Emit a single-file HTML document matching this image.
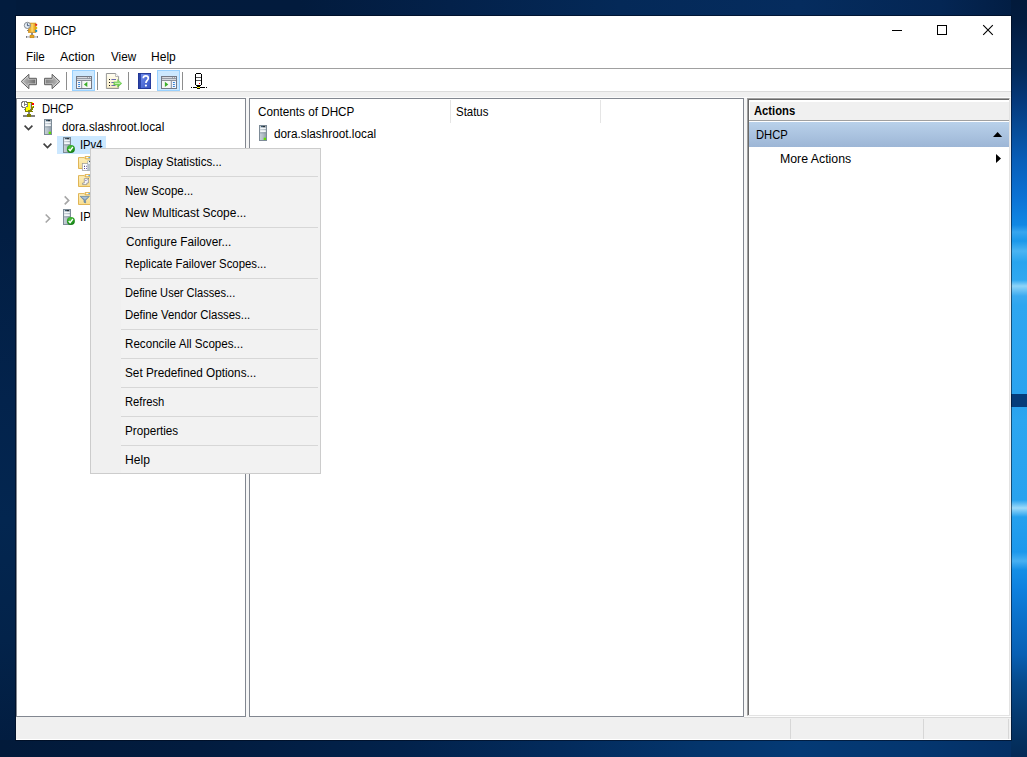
<!DOCTYPE html>
<html>
<head>
<meta charset="utf-8">
<title>DHCP</title>
<style>
html,body{margin:0;padding:0;}
body{width:1027px;height:757px;overflow:hidden;position:relative;background:#021c3e;
 font-family:"Liberation Sans",sans-serif;font-size:12px;color:#000;}
div,span,svg{position:absolute;box-sizing:border-box;}
.t{white-space:nowrap;line-height:14px;height:14px;font-size:12px;transform-origin:0 50%;}
.b{font-weight:bold;}
/* wallpaper strips */
#wp-top{left:0;top:0;width:1027px;height:16px;
 background:linear-gradient(90deg,#021b3c 0,#021b3d 300px,#03214a 450px,#042958 620px,#052c5e 800px,#042654 940px,#021c40 1027px);}
#wp-left{left:0;top:0;width:16px;height:757px;
 background:linear-gradient(180deg,#021c3e 0,#021d41 200px,#03234c 400px,#032650 520px,#03234a 640px,#021c3f 757px);}
#wp-bot{left:0;top:740px;width:1027px;height:17px;
 background:linear-gradient(90deg,#021a3a 0,#021c3f 200px,#02224b 400px,#032b5c 560px,#04356c 700px,#043a75 800px,#04366f 920px,#042f63 1027px);}
#wp-right{left:1011px;top:0;width:16px;height:757px;
 background:linear-gradient(180deg,#021a3b 0,#021b3e 20px,#03214a 40px,#032a5a 70px,#05387a 100px,#064c98 130px,#085eb8 160px,#0a6ecf 190px,#0b74d6 200px,#1088e4 225px,#36a5ef 232px,#1a98ea 241px,#4ab4f2 251px,#28a4ee 262px,#30a8f0 280px,#8ed4f8 286px,#3aaaf0 296px,#2ea6f0 305px,#2aa3ef 394px,#2aa3ef 407px,#2ca6f0 420px,#28a2ee 500px,#9cdafa 508px,#24a0ee 517px,#1c98ec 552px,#48b0f2 561px,#148ee6 570px,#0e80de 590px,#0b72cc 615px,#0860b4 654px,#064a8c 683px,#053c74 711px,#04305f 740px,#042a56 757px);}
#wp-band{left:1011px;top:394px;width:16px;height:13px;background:#063c7a;}
.streak{left:1011px;width:16px;height:5px;}
/* window */
#win{left:16px;top:16px;width:995px;height:724px;background:#fff;box-shadow:0 0 0 1px rgba(0,8,24,.55);}
#menuline{left:16px;top:68px;width:995px;height:1px;background:#a0a0a0;}
#graybar{left:16px;top:92px;width:995px;height:625px;background:#f0f0f0;}
#status{left:16px;top:717px;width:995px;height:23px;background:#f0f0f0;}
.pane{background:#fff;border:1px solid #828790;}
.vsep{top:72px;width:1px;height:18px;background:#8d8d8d;}
.tbhl{top:70px;width:23px;height:21px;background:#cce8ff;border:1px solid #99d1ff;}
.sdiv{top:719px;width:1px;height:20px;background:#d7d7d7;}
.cdiv{top:100px;width:1px;height:23px;background:#e5e5e5;}
/* context menu */
#ctx{left:90px;top:148px;width:231px;height:326px;background:#f2f2f2;border:1px solid #ccc;}
.sep{left:121px;width:197px;height:1px;background:#d7d7d7;}
</style>
</head>
<body>
<div id="wp-top"></div>
<div id="wp-left"></div>
<div id="wp-bot"></div>
<div id="wp-right"></div>
<div id="wp-band"></div>

<div id="win"></div>
<div id="menuline"></div>
<div id="graybar"></div>
<div id="status"></div>
<div style="left:16px;top:739px;width:995px;height:1px;background:#fff;"></div>

<!-- panes -->
<div style="left:16px;top:91px;width:995px;height:1px;background:#dcdcdc;"></div>
<div style="left:16px;top:97px;width:995px;height:1px;background:#fbfbfb;"></div>
<div style="left:246px;top:98px;width:3px;height:619px;background:#f6f6f6;"></div>
<div style="left:744px;top:98px;width:3px;height:619px;background:#f6f6f6;"></div>
<div class="pane" id="p-left" style="left:16px;top:98px;width:230px;height:619px;"></div>
<div class="pane" id="p-mid" style="left:249px;top:98px;width:495px;height:619px;"></div>
<div id="p-right" style="left:747px;top:98px;width:263px;height:618px;background:#fff;border-left:1px solid #a0a0a0;border-top:1px solid #a0a0a0;border-right:1px solid #e3e3e3;border-bottom:1px solid #e3e3e3;"></div>
<div style="left:748px;top:99px;width:261px;height:616px;border-left:1px solid #696969;border-top:1px solid #696969;"></div>

<div style="left:744px;top:716px;width:267px;height:1px;background:#fdfdfd;"></div>
<div style="left:744px;top:717px;width:267px;height:1px;background:#dadada;"></div>
<!-- toolbar -->
<div class="vsep" style="left:66px"></div>
<div class="vsep" style="left:97px"></div>
<div class="vsep" style="left:128px"></div>
<div class="vsep" style="left:182px"></div>
<div class="tbhl" style="left:72px"></div>
<div class="tbhl" style="left:157px"></div>

<!-- list header dividers -->
<div class="cdiv" style="left:450px"></div>
<div class="cdiv" style="left:600px"></div>

<!-- status dividers -->
<div class="sdiv" style="left:790px"></div>
<div class="sdiv" style="left:923px"></div>
<div class="sdiv" style="left:1008px"></div>

<!-- tree selection -->
<div id="sel" style="left:57px;top:136px;width:49px;height:18px;background:#cce8ff;"></div>

<svg width="0" height="0" style="left:0;top:0">
<defs>
<linearGradient id="gSrv" x1="0" y1="0" x2="1" y2="0"><stop offset="0" stop-color="#c9d2d9"/><stop offset=".5" stop-color="#b3bec7"/><stop offset="1" stop-color="#8e9ba6"/></linearGradient>
<linearGradient id="gArr" x1="0" y1="0" x2="0" y2="1"><stop offset="0" stop-color="#b9b9b9"/><stop offset=".5" stop-color="#8f8f8f"/><stop offset="1" stop-color="#a9a9a9"/></linearGradient>
<linearGradient id="gFold" x1="0" y1="0" x2="0" y2="1"><stop offset="0" stop-color="#fdf0be"/><stop offset="1" stop-color="#f8dc8e"/></linearGradient>
<linearGradient id="gOr" x1="0" y1="0" x2="1" y2="0"><stop offset="0" stop-color="#e39a1c"/><stop offset=".55" stop-color="#f7c64a"/><stop offset=".75" stop-color="#f3b838"/><stop offset="1" stop-color="#d68d14"/></linearGradient>
<linearGradient id="gHelp" x1="0" y1="0" x2="1" y2="1"><stop offset="0" stop-color="#6f8cec"/><stop offset="1" stop-color="#3350c0"/></linearGradient>
<radialGradient id="gChk" cx=".4" cy=".3" r=".8"><stop offset="0" stop-color="#4cc23c"/><stop offset=".6" stop-color="#239a1f"/><stop offset="1" stop-color="#0f6a12"/></radialGradient>
<linearGradient id="gAct" x1="0" y1="0" x2="0" y2="1"><stop offset="0" stop-color="#b9d1ea"/><stop offset="1" stop-color="#9db6d6"/></linearGradient>
<linearGradient id="gGrn" x1="0" y1="0" x2="0" y2="1"><stop offset="0" stop-color="#a4ea80"/><stop offset="1" stop-color="#4dbd32"/></linearGradient>
</defs>
</svg>

<!-- title icon -->
<svg style="left:23px;top:21px" width="17" height="18" viewBox="23 21 17 18">
 <rect x="28.4" y="23.1" width="7.4" height="9.4" fill="url(#gOr)" stroke="#c98a14" stroke-width=".7"/>
 <rect x="31.2" y="24" width="1.8" height="7.6" fill="#f9d46a" opacity=".8"/>
 <circle cx="36.2" cy="24.8" r="1.15" fill="#e3261c"/>
 <circle cx="36.2" cy="27.9" r="1.15" fill="#d8b400"/>
 <circle cx="36.2" cy="31" r="1.15" fill="#1c8fc8"/>
 <circle cx="27.4" cy="25.4" r="3.1" fill="#e6eef6" stroke="#7b8087" stroke-width=".9"/>
 <path d="M27.4,23.3 V25.7 H29.6" fill="none" stroke="#34496a" stroke-width=".9"/>
 <rect x="27" y="30" width="1.4" height=".9" fill="#777"/>
 <rect x="31.2" y="32.8" width="1.6" height="2.3" fill="#6d7684"/>
 <rect x="26" y="36" width="12" height="1.8" fill="#c4c7d0"/>
 <rect x="26" y="36" width="1" height="1.8" fill="#777"/>
 <rect x="37" y="36" width="1" height="1.8" fill="#777"/>
 <rect x="30" y="35.1" width="4" height="2.7" fill="#e7a51f" stroke="#b97c0c" stroke-width=".5"/>
</svg>

<!-- tree DHCP icon (16 colour) -->
<svg style="left:20px;top:100px" width="16" height="18" viewBox="20 100 16 18" shape-rendering="crispEdges">
 <path d="M22,101 H27 V102 H28 V107 H27 V108 H22 V107 H21 V102 H22 Z" fill="#fff"/>
 <path d="M22,101 H27 V102 H28 V107 H27 V108 H22 V107 H21 V102 H22 Z M22.9,102 H26.1 V102.9 H27 V106.1 H26.1 V107 H22.9 V106.1 H22 V102.9 H22.9 Z" fill="#808080" fill-rule="evenodd"/>
 <rect x="24" y="102" width="1" height="4" fill="#808080"/><rect x="25" y="104" width="2" height="1" fill="#808080"/>
 <rect x="27" y="102" width="5" height="1" fill="#808000"/>
 <rect x="28" y="103" width="3" height="6" fill="#ffff00"/>
 <rect x="26" y="107" width="5" height="4" fill="#ffff00"/>
 <rect x="30" y="103" width="1" height="6" fill="#c8c8d8"/>
 <rect x="31" y="102" width="1" height="9" fill="#808000"/>
 <rect x="25" y="108" width="1" height="3" fill="#808000"/>
 <rect x="25" y="111" width="8" height="1" fill="#808000"/>
 <rect x="28" y="110" width="4" height="1" fill="#808000"/>
 <rect x="24" y="109" width="1" height="1" fill="#8080a0"/><rect x="30" y="109" width="1" height="1" fill="#606080"/>
 <rect x="32" y="102" width="1" height="1" fill="#ffff00"/>
 <rect x="32" y="103" width="2" height="2" fill="#ff0000"/>
 <rect x="32" y="106" width="1" height="1" fill="#ffff00"/>
 <rect x="33" y="106" width="1" height="2" fill="#808000"/>
 <rect x="32" y="107" width="1" height="3" fill="#808000"/>
 <rect x="28" y="112" width="2" height="2" fill="#808090"/>
 <rect x="23" y="115" width="12" height="2" fill="#808080"/>
 <rect x="27" y="114" width="4" height="3" fill="#808000"/>
</svg>

<!-- tree chevrons -->
<svg style="left:22px;top:122px" width="14" height="12" viewBox="22 122 14 12"><path d="M24.6,125.6 L28.5,129.6 L32.4,125.6" fill="none" stroke="#404040" stroke-width="1.6"/></svg>
<svg style="left:41px;top:140px" width="14" height="12" viewBox="41 140 14 12"><path d="M43.6,143.6 L47.5,147.6 L51.4,143.6" fill="none" stroke="#404040" stroke-width="1.6"/></svg>
<svg style="left:62px;top:194px" width="10" height="13" viewBox="62 194 10 13"><path d="M64.7,196.4 L68.7,200.4 L64.7,204.4" fill="none" stroke="#a6a6a6" stroke-width="1.6"/></svg>
<svg style="left:43px;top:212px" width="10" height="13" viewBox="43 212 10 13"><path d="M45.7,214.5 L49.7,218.5 L45.7,222.5" fill="none" stroke="#a6a6a6" stroke-width="1.6"/></svg>

<!-- servers -->
<svg style="left:44px;top:119px" width="8" height="16" viewBox="0 0 8 16"><g>
 <rect x=".5" y=".5" width="7" height="15" fill="url(#gSrv)" stroke="#7d8b97"/>
 <rect x="2" y="1.2" width="4" height="1" fill="#1d3f55"/>
 <rect x="4" y="1.2" width="2" height="1" fill="#2a2a2a"/>
 <rect x="1.2" y="2.6" width="5.6" height="1.6" fill="#f4f7f9"/>
 <rect x="1.2" y="5.2" width="5.6" height="1.8" fill="#f4f7f9"/>
 <rect x="1" y="7.6" width="6" height=".7" fill="#8996a1"/>
</g><rect x="4.7" y="12.7" width="2.3" height="2.3" fill="#5fe000"/></svg>
<svg style="left:259px;top:125px" width="8" height="16" viewBox="0 0 8 16"><g>
 <rect x=".5" y=".5" width="7" height="15" fill="url(#gSrv)" stroke="#7d8b97"/>
 <rect x="2" y="1.2" width="4" height="1" fill="#1d3f55"/>
 <rect x="4" y="1.2" width="2" height="1" fill="#2a2a2a"/>
 <rect x="1.2" y="2.6" width="5.6" height="1.6" fill="#f4f7f9"/>
 <rect x="1.2" y="5.2" width="5.6" height="1.8" fill="#f4f7f9"/>
 <rect x="1" y="7.6" width="6" height=".7" fill="#8996a1"/>
</g><rect x="4.7" y="12.7" width="2.3" height="2.3" fill="#5fe000"/></svg>
<svg style="left:63px;top:137px" width="13" height="17" viewBox="0 0 13 17"><g>
 <rect x=".5" y=".5" width="7" height="15" fill="url(#gSrv)" stroke="#7d8b97"/>
 <rect x="2" y="1.2" width="4" height="1" fill="#1d3f55"/>
 <rect x="4" y="1.2" width="2" height="1" fill="#2a2a2a"/>
 <rect x="1.2" y="2.6" width="5.6" height="1.6" fill="#f4f7f9"/>
 <rect x="1.2" y="5.2" width="5.6" height="1.8" fill="#f4f7f9"/>
 <rect x="1" y="7.6" width="6" height=".7" fill="#8996a1"/>
</g><g transform="translate(7.9,11.9)">
 <circle cx="0" cy="0" r="4" fill="url(#gChk)"/>
 <path d="M-2.2,.1 L-.8,1.7 L2,-1.9" fill="none" stroke="#fff" stroke-width="1.35"/>
</g></svg>
<svg style="left:63px;top:209px" width="13" height="17" viewBox="0 0 13 17"><g>
 <rect x=".5" y=".5" width="7" height="15" fill="url(#gSrv)" stroke="#7d8b97"/>
 <rect x="2" y="1.2" width="4" height="1" fill="#1d3f55"/>
 <rect x="4" y="1.2" width="2" height="1" fill="#2a2a2a"/>
 <rect x="1.2" y="2.6" width="5.6" height="1.6" fill="#f4f7f9"/>
 <rect x="1.2" y="5.2" width="5.6" height="1.8" fill="#f4f7f9"/>
 <rect x="1" y="7.6" width="6" height=".7" fill="#8996a1"/>
</g><g transform="translate(7.9,11.9)">
 <circle cx="0" cy="0" r="4" fill="url(#gChk)"/>
 <path d="M-2.2,.1 L-.8,1.7 L2,-1.9" fill="none" stroke="#fff" stroke-width="1.35"/>
</g></svg>

<!-- folders (clipped by menu) -->
<svg style="left:78px;top:156px" width="16" height="16" viewBox="0 0 16 16"><g>
 <path d="M7,.6 L15.4,.6 L15.4,3 L7,3 Z" fill="#f6d884" stroke="#dcae48" stroke-width=".9"/>
 <rect x="8.2" y="1.1" width="4" height="1.3" fill="#fff"/>
 <rect x="10.4" y="1.1" width="3" height="1.3" fill="#4aa0e8"/>
 <path d="M.5,1.6 L6.2,1.6 L7.4,2.9 L15.5,2.9 L15.5,12.5 L.5,12.5 Z" fill="url(#gFold)" stroke="#dcae48" stroke-width=".9"/>
</g>
 <rect x="4.3" y="7.6" width="6.2" height="7" fill="#fff" stroke="#9a9a9a" stroke-width=".7"/>
 <rect x="6" y="9.8" width="1" height="1" fill="#2a2050"/><rect x="8" y="9.8" width="1" height="1" fill="#7a68b0"/>
 <rect x="6" y="12" width="1" height="1" fill="#5a48a0"/><rect x="8" y="12" width="1" height="1" fill="#7a68b0"/>
 <rect x="9.8" y="4.8" width="3.4" height="10" fill="#b9c3cb" stroke="#98a4ae" stroke-width=".5"/>
 <rect x="10" y="5" width="3" height="3" fill="#eef2f6"/>
 <rect x="11" y="5.1" width="1.2" height="1" fill="#123a4a"/>
</svg>
<svg style="left:78px;top:174px" width="16" height="16" viewBox="0 0 16 16"><g>
 <path d="M7,.6 L15.4,.6 L15.4,3 L7,3 Z" fill="#f6d884" stroke="#dcae48" stroke-width=".9"/>
 <rect x="8.2" y="1.1" width="4" height="1.3" fill="#fff"/>
 <rect x="10.4" y="1.1" width="3" height="1.3" fill="#4aa0e8"/>
 <path d="M.5,1.6 L6.2,1.6 L7.4,2.9 L15.5,2.9 L15.5,12.5 L.5,12.5 Z" fill="url(#gFold)" stroke="#dcae48" stroke-width=".9"/>
</g>
 <path d="M6.3,4.6 H10.4 V9 H8.8 V10.6 H4.6 V9 H6.3 Z" fill="#f4f4f8" stroke="#8a8a8a" stroke-width=".7"/>
 <rect x="7.4" y="6" width="1" height="1" fill="#6a58a8"/>
 <path d="M9.6,5.4 L10.8,4.2" stroke="#777" stroke-width=".9"/>
</svg>
<svg style="left:78px;top:192px" width="16" height="16" viewBox="0 0 16 16"><g>
 <path d="M7,.6 L15.4,.6 L15.4,3 L7,3 Z" fill="#f6d884" stroke="#dcae48" stroke-width=".9"/>
 <rect x="8.2" y="1.1" width="4" height="1.3" fill="#fff"/>
 <rect x="10.4" y="1.1" width="3" height="1.3" fill="#4aa0e8"/>
 <path d="M.5,1.6 L6.2,1.6 L7.4,2.9 L15.5,2.9 L15.5,12.5 L.5,12.5 Z" fill="url(#gFold)" stroke="#dcae48" stroke-width=".9"/>
</g>
 <path d="M2.2,4.4 H11.4 L7.6,8.2 V10.9 L6,10.2 V8.2 Z" fill="#7d9bb8" stroke="#56789a" stroke-width=".6"/>
 <path d="M3.6,5 H10 L7,7.6 Z" fill="#a9c0d6"/>
</svg>

<!-- toolbar: back / forward -->
<svg style="left:19px;top:72px" width="44" height="19" viewBox="19 72 44 19">
 <defs>
 <linearGradient id="gA1" x1="0" y1="0" x2="1" y2="0"><stop offset="0" stop-color="#b4b4b4"/><stop offset=".45" stop-color="#9a9a9a"/><stop offset="1" stop-color="#6f6f6f"/></linearGradient>
 <linearGradient id="gA2" x1="0" y1="0" x2="1" y2="0"><stop offset="0" stop-color="#858585"/><stop offset=".55" stop-color="#9a9a9a"/><stop offset="1" stop-color="#b8b8b8"/></linearGradient>
 </defs>
 <path d="M21.2,81.5 L28.9,74.3 L28.9,78.3 L36.4,78.3 L36.4,84.7 L28.9,84.7 L28.9,88.7 Z" fill="#cfcfcf" stroke="#5c5c5c" stroke-width="1" stroke-linejoin="round"/>
 <path d="M23.1,81.5 L27.7,77.2 L27.7,79.5 L35.2,79.5 L35.2,83.5 L27.7,83.5 L27.7,85.8 Z" fill="url(#gA1)"/>
 <path d="M59.8,81.5 L52.1,74.3 L52.1,78.3 L44.6,78.3 L44.6,84.7 L52.1,84.7 L52.1,88.7 Z" fill="#cfcfcf" stroke="#5c5c5c" stroke-width="1" stroke-linejoin="round"/>
 <path d="M57.9,81.5 L53.3,77.2 L53.3,79.5 L45.8,79.5 L45.8,83.5 L53.3,83.5 L53.3,85.8 Z" fill="url(#gA2)"/>
</svg>

<!-- toolbar: show/hide tree -->
<svg style="left:76px;top:76px" width="16" height="13" viewBox="0 0 16 13">
 <rect x=".5" y=".5" width="15" height="12" fill="#8d929d" stroke="#747986"/>
 <rect x="1.2" y="1.2" width="9.8" height=".9" fill="#e9ebf0"/>
 <rect x="11.8" y="1.1" width="1" height="1" fill="#fff"/><rect x="13.8" y="1.1" width="1" height="1" fill="#fff"/>
 <rect x="1" y="3.1" width="14" height=".9" fill="#dfe2e8"/>
 <rect x="1" y="5" width="4.2" height="7" fill="#f3f5fa"/>
 <rect x="6.2" y="5" width="8.8" height="7" fill="#f6f6f6"/>
 <rect x="2" y="6" width="2.2" height="1" rx=".4" fill="#2f7fd6"/><rect x="2" y="8" width="2.2" height="1" rx=".4" fill="#2f7fd6"/><rect x="2" y="10" width="2.2" height="1" rx=".4" fill="#2f7fd6"/>
 <path d="M7.9,8.4 L11.3,5.8 L11.3,11 Z" fill="#3bb02a"/>
</svg>

<!-- toolbar: export list -->
<svg style="left:105px;top:72px" width="18" height="18" viewBox="105 72 18 18">
 <defs><linearGradient id="gPg" x1="0" y1="0" x2="0" y2="1"><stop offset="0" stop-color="#fffdf2"/><stop offset="1" stop-color="#fbefc6"/></linearGradient></defs>
 <path d="M106.4,73.5 H115.6 L118.6,76.5 V88.5 H106.4 Z" fill="url(#gPg)" stroke="#8c8c8c" stroke-width=".9"/>
 <path d="M115.6,73.5 V76.5 H118.6" fill="#fff" stroke="#9a9a9a" stroke-width=".7"/>
 <rect x="106.9" y="87" width="11.3" height="1" fill="#e9dfc0"/>
 <rect x="109" y="79" width="1" height="1" fill="#111"/><rect x="109" y="82" width="1" height="1" fill="#111"/><rect x="109" y="85" width="1" height="1" fill="#111"/>
 <rect x="111.4" y="79" width="4.6" height="1" fill="#6c6cb0"/><rect x="111.4" y="82" width="3" height="1" fill="#6c6cb0"/><rect x="111.4" y="85" width="4" height="1" fill="#6c6cb0"/>
 <path d="M113.8,81.9 H117.6 V79.6 L121.8,83.4 L117.6,87.2 V84.9 H113.8 Z" fill="url(#gGrn)" stroke="#55c038" stroke-width=".5" opacity=".92"/>
 <path d="M115,83.4 H120" stroke="#d9f8c8" stroke-width="1" opacity=".85"/>
</svg>

<!-- toolbar: help -->
<svg style="left:138px;top:73px" width="13" height="16" viewBox="0 0 13 16">
 <rect x="0" y="0" width="13" height="16" fill="#1c2f8c"/>
 <rect x=".6" y=".6" width="2.4" height="14.8" fill="#2c44a8"/>
 <rect x="3" y=".8" width="9.3" height="14.4" fill="url(#gHelp)"/>
 <path d="M5.3,5.2 C5.3,2.2 10.3,2.2 10.3,5.2 C10.3,7.3 7.9,7.4 7.9,10" fill="none" stroke="#fff" stroke-width="1.7"/>
 <circle cx="7.9" cy="12.6" r="1.1" fill="#fff"/>
</svg>

<!-- toolbar: show/hide action pane -->
<svg style="left:161px;top:76px" width="16" height="13" viewBox="0 0 16 13">
 <rect x=".5" y=".5" width="15" height="12" fill="#8d929d" stroke="#747986"/>
 <rect x="1.2" y="1.2" width="9.8" height=".9" fill="#e9ebf0"/>
 <rect x="11.8" y="1.1" width="1" height="1" fill="#fff"/><rect x="13.8" y="1.1" width="1" height="1" fill="#fff"/>
 <rect x="1" y="3.1" width="14" height=".9" fill="#dfe2e8"/>
 <rect x="1" y="5" width="8.8" height="7" fill="#f6f6f6"/>
 <rect x="10.8" y="5" width="4.2" height="7" fill="#f3f5fa"/>
 <rect x="11.8" y="6" width="2.2" height="1" rx=".4" fill="#2f7fd6"/><rect x="11.8" y="8" width="2.2" height="1" rx=".4" fill="#2f7fd6"/><rect x="11.8" y="10" width="2.2" height="1" rx=".4" fill="#2f7fd6"/>
 <path d="M7.3,8.4 L3.9,5.8 L3.9,11 Z" fill="#3bb02a"/>
</svg>

<!-- toolbar: server/network -->
<svg style="left:190px;top:72px" width="18" height="18" viewBox="190 72 18 18" shape-rendering="crispEdges">
 <rect x="196" y="73" width="5" height="1" fill="#000"/>
 <rect x="195" y="74" width="1" height="11" fill="#000"/><rect x="201" y="74" width="1" height="11" fill="#000"/>
 <rect x="196" y="85" width="5" height="1" fill="#000"/>
 <rect x="196" y="77" width="5" height="1" fill="#5a5a5a"/><rect x="196" y="80" width="5" height="1" fill="#5a5a5a"/>
 <rect x="199" y="83" width="1" height="1" fill="#ff0000"/>
 <rect x="197" y="86" width="3" height="1" fill="#000"/>
 <rect x="191" y="87" width="1" height="1" fill="#000"/><rect x="193" y="87" width="4" height="1" fill="#000"/>
 <rect x="197" y="87" width="3" height="1" fill="#f0f000"/>
 <rect x="200" y="87" width="5" height="1" fill="#000"/><rect x="206" y="87" width="1" height="1" fill="#000"/>
 <rect x="197" y="88" width="3" height="1" fill="#000"/>
</svg>

<!-- window controls -->
<svg style="left:890px;top:22px" width="110" height="16" viewBox="890 22 110 16" shape-rendering="crispEdges">
 <rect x="892" y="30" width="10" height="1" fill="#000"/>
 <rect x="937.5" y="25.5" width="9" height="9" fill="none" stroke="#000" stroke-width="1"/>
</svg>
<svg style="left:980px;top:22px" width="16" height="16" viewBox="980 22 16 16">
 <path d="M983.2,25.2 L992.8,34.8 M992.8,25.2 L983.2,34.8" stroke="#000" stroke-width="1.1" fill="none"/>
</svg>

<!-- actions pane -->
<div style="left:750px;top:102px;width:259px;height:18px;background:#f0f0f0;"></div>
<div style="left:749px;top:120px;width:260px;height:1px;background:#a0a0a0;"></div>
<div style="left:749px;top:122px;width:260px;height:25px;background:linear-gradient(180deg,#b9d1ea,#9db6d6);"></div>
<svg style="left:990px;top:130px" width="14" height="9" viewBox="990 130 14 9"><path d="M993,137 L997.6,131.9 L1002.2,137 Z" fill="#000"/></svg>
<svg style="left:994px;top:152px" width="9" height="13" viewBox="994 152 9 13"><path d="M996,153.9 L1001,158.5 L996,163.1 Z" fill="#000"/></svg>


<span class="t" style="left:44.3px;top:24.0px;transform:scaleX(0.9455);color:#000">DHCP</span>
<span class="t" style="left:25.5px;top:50.0px;transform:scaleX(0.9722);color:#000">File</span>
<span class="t" style="left:60.2px;top:50.0px;transform:scaleX(1.0394);color:#000">Action</span>
<span class="t" style="left:110.6px;top:50.0px;transform:scaleX(0.9731);color:#000">View</span>
<span class="t" style="left:151.4px;top:50.0px;transform:scaleX(1.0042);color:#000">Help</span>
<span class="t" style="left:41.6px;top:101.5px;transform:scaleX(0.9273);color:#000">DHCP</span>
<span class="t" style="left:61.6px;top:119.5px;transform:scaleX(0.9827);color:#000">dora.slashroot.local</span>
<span class="t" style="left:79.8px;top:137.5px;transform:scaleX(0.9348);color:#000">IPv4</span>
<span class="t" style="left:79.7px;top:209.5px;transform:scaleX(0.9600);color:#000">IP</span>
<span class="t" style="left:257.5px;top:104.5px;transform:scaleX(0.9765);color:#000">Contents of DHCP</span>
<span class="t" style="left:456.3px;top:104.5px;transform:scaleX(0.9545);color:#000">Status</span>
<span class="t" style="left:273.8px;top:126.5px;transform:scaleX(0.9808);color:#000">dora.slashroot.local</span>
<span class="t b" style="left:754.0px;top:103.5px;transform:scaleX(0.9364);color:#000">Actions</span>
<span class="t" style="left:755.5px;top:127.5px;transform:scaleX(0.9333);color:#000">DHCP</span>
<span class="t" style="left:779.8px;top:151.5px;transform:scaleX(1.0265);color:#000">More Actions</span>

<!-- context menu -->
<div id="ctx"></div>
<div style="left:91px;top:149px;width:30px;height:324px;background:#f0f0f0;"></div>
<span class="t" style="left:124.5px;top:155.0px;transform:scaleX(0.9616);color:#000">Display Statistics...</span>
<span class="t" style="left:124.5px;top:184.0px;transform:scaleX(0.9571);color:#000">New Scope...</span>
<span class="t" style="left:124.5px;top:206.0px;transform:scaleX(0.9942);color:#000">New Multicast Scope...</span>
<span class="t" style="left:125.5px;top:235.0px;transform:scaleX(0.9813);color:#000">Configure Failover...</span>
<span class="t" style="left:124.6px;top:257.0px;transform:scaleX(0.9466);color:#000">Replicate Failover Scopes...</span>
<span class="t" style="left:124.6px;top:286.0px;transform:scaleX(0.9237);color:#000">Define User Classes...</span>
<span class="t" style="left:124.6px;top:308.0px;transform:scaleX(0.9485);color:#000">Define Vendor Classes...</span>
<span class="t" style="left:124.5px;top:337.0px;transform:scaleX(0.9692);color:#000">Reconcile All Scopes...</span>
<span class="t" style="left:124.5px;top:366.0px;transform:scaleX(0.9795);color:#000">Set Predefined Options...</span>
<span class="t" style="left:124.6px;top:395.0px;transform:scaleX(0.9341);color:#000">Refresh</span>
<span class="t" style="left:124.5px;top:424.0px;transform:scaleX(0.9722);color:#000">Properties</span>
<span class="t" style="left:124.5px;top:453.0px;transform:scaleX(1.0083);color:#000">Help</span>
<div class="sep" style="top:176px"></div>
<div class="sep" style="top:227px"></div>
<div class="sep" style="top:278px"></div>
<div class="sep" style="top:329px"></div>
<div class="sep" style="top:358px"></div>
<div class="sep" style="top:387px"></div>
<div class="sep" style="top:416px"></div>
<div class="sep" style="top:445px"></div>
</body>
</html>
